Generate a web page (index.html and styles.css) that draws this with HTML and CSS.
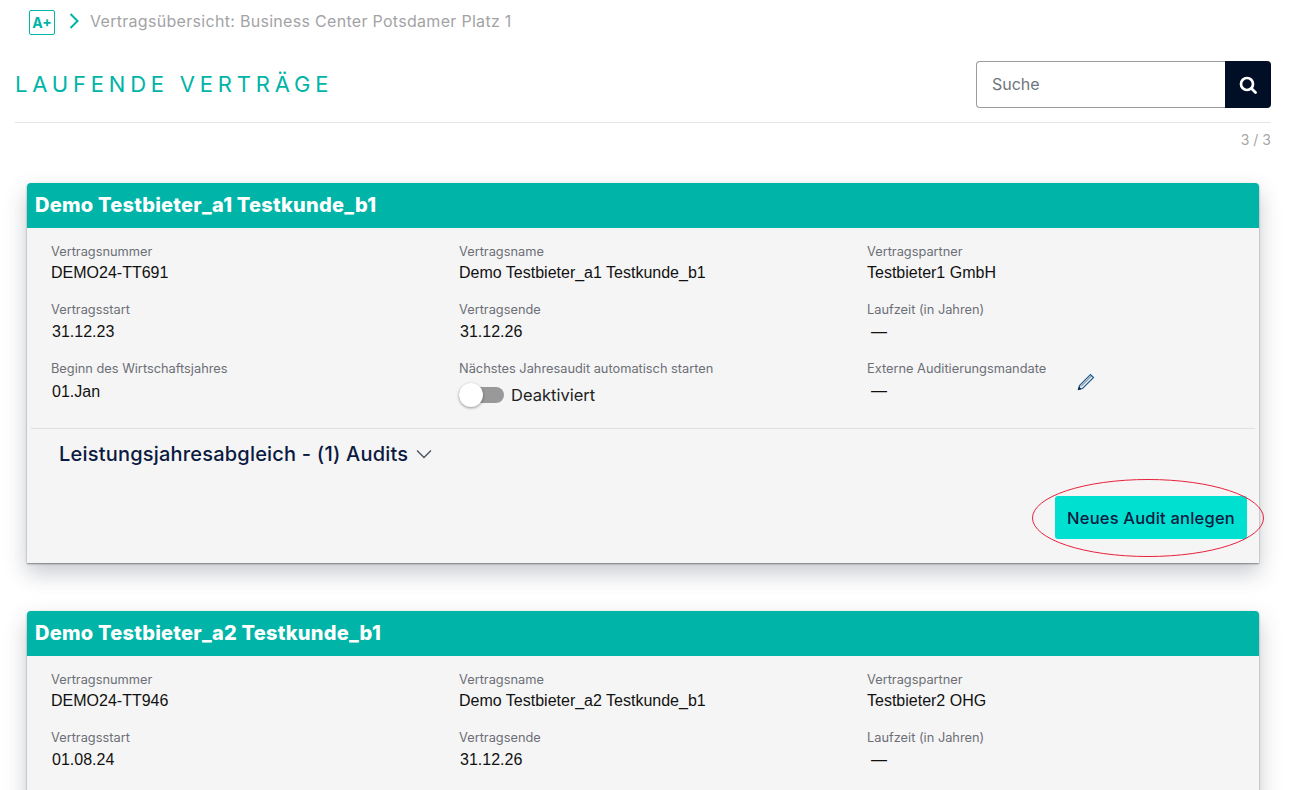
FILE: index.html
```html
<!DOCTYPE html>
<html lang="de">
<head>
<meta charset="utf-8">
<title>Laufende Verträge</title>
<link rel="stylesheet" href="styles.css">
</head>
<body>
<div class="page">
  <nav class="crumbs">
    <span class="logo">A+</span>
    <svg class="crumb-arrow" width="12" height="16" viewBox="0 0 12 16"><path d="M2.5 1 9.500 8l-7 7" fill="none" stroke="#00b4a7" stroke-width="2"/></svg>
    <span class="crumb-text">Vertragsübersicht: Business Center Potsdamer Platz 1</span>
  </nav>
  <header class="head">
    <h1 class="title">LAUFENDE VERTRÄGE</h1>
    <form class="search">
      <div class="search-input">Suche</div>
      <div class="search-btn">
        <svg width="18" height="18" viewBox="0 0 18 18"><circle cx="8" cy="8" r="6" fill="none" stroke="#fff" stroke-width="2.700"/><path d="m12.500 12.500 4 4" stroke="#fff" stroke-width="2.800" stroke-linecap="round"/></svg>
      </div>
    </form>
  </header>
  <div class="count">3 / 3</div>

  <section class="card">
    <h2 class="card-head">Demo Testbieter_a1 Testkunde_b1</h2>
    <div class="card-body">
      <div class="fields">
        <div class="field"><div class="label">Vertragsnummer</div><div class="value">DEMO24-TT691</div></div>
        <div class="field"><div class="label">Vertragsname</div><div class="value">Demo Testbieter_a1 Testkunde_b1</div></div>
        <div class="field"><div class="label">Vertragspartner</div><div class="value">Testbieter1 GmbH</div></div>
        <div class="field"><div class="label">Vertragsstart</div><div class="value inset">31.12.23</div></div>
        <div class="field"><div class="label">Vertragsende</div><div class="value inset">31.12.26</div></div>
        <div class="field"><div class="label">Laufzeit (in Jahren)</div><div class="value dash">—</div></div>
        <div class="field"><div class="label">Beginn des Wirtschaftsjahres</div><div class="value inset low">01.Jan</div></div>
        <div class="field"><div class="label">Nächstes Jahresaudit automatisch starten</div>
          <div class="toggle-row"><span class="toggle"><span class="knob"></span></span><span class="toggle-text">Deaktiviert</span></div>
        </div>
        <div class="field field-edit">
          <div><div class="label">Externe Auditierungsmandate</div><div class="value dash">—</div></div>
          <svg class="pencil" width="18" height="18" viewBox="0 0 18 18"><path d="M1.500 16.500 2.500 12.500 13.500 1.500l3 3L5.500 15.500Z" fill="none" stroke="#1a5f96" stroke-width="1.200"/><path d="M1 17 2 13.500 4.500 16Z" fill="#0d2036"/><path d="M4 13.500 14.500 3" stroke="#123" stroke-width=".7"/></svg>
        </div>
      </div>
      <div class="rule"></div>
      <div class="accordion">
        <span>Leistungsjahresabgleich - (1) Audits</span>
        <svg width="16" height="10" viewBox="0 0 16 10"><path d="m1 1.500 7 7 7-7" fill="none" stroke="#4d5662" stroke-width="1.400"/></svg>
      </div>
      <div class="actions">
        <button class="primary" type="button">Neues Audit anlegen</button>
      </div>
      <svg class="ring" width="234" height="80" viewBox="0 0 234 80"><ellipse cx="117" cy="40" rx="115.500" ry="38.500" fill="none" stroke="#e8213c" stroke-width="1"/></svg>
    </div>
  </section>

  <section class="card">
    <h2 class="card-head">Demo Testbieter_a2 Testkunde_b1</h2>
    <div class="card-body">
      <div class="fields">
        <div class="field"><div class="label">Vertragsnummer</div><div class="value">DEMO24-TT946</div></div>
        <div class="field"><div class="label">Vertragsname</div><div class="value">Demo Testbieter_a2 Testkunde_b1</div></div>
        <div class="field"><div class="label">Vertragspartner</div><div class="value">Testbieter2 OHG</div></div>
        <div class="field"><div class="label">Vertragsstart</div><div class="value inset">01.08.24</div></div>
        <div class="field"><div class="label">Vertragsende</div><div class="value inset">31.12.26</div></div>
        <div class="field"><div class="label">Laufzeit (in Jahren)</div><div class="value dash">—</div></div>
      </div>
    </div>
  </section>
</div>
</body>
</html>
```
FILE: styles.css
```css
* { box-sizing: border-box; }
html, body { margin: 0; height: 790px; overflow: hidden; background: #fff; }
body { font-family: "Inter", "Liberation Sans", sans-serif; color: #0b1a33; }
.page { padding: 10px 21px 0 15px; }
.crumbs { display: flex; align-items: center; height: 25px; padding-left: 14px; }
.logo { width: 26px; height: 25px; border: 1px solid #00b4a7; border-radius: 2px; color: #00b4a7; font-size: 14px; font-weight: 700; display: flex; align-items: center; justify-content: center; }
.crumb-arrow { margin-left: 13px; margin-top: -3px; }
.crumb-text { margin-left: 10px; margin-top: -3px; color: #a3a3a6; font-size: 16px; letter-spacing: .3px; }
.head { display: flex; justify-content: space-between; align-items: center; height: 88px; padding-top: 12px; border-bottom: 1px solid #e4e4e4; }
.title { margin: -2px 0 0; color: #00b4a7; font-size: 22px; font-weight: 400; letter-spacing: 4.800px; }
.search { display: flex; width: 295px; height: 47px; }
.search-input { flex: 1; border: 1px solid #9c9c9c; border-right: 0; border-radius: 4px 0 0 4px; padding: 0 0 2px 15px; display: flex; align-items: center; color: #70757c; font-size: 16px; }
.search-btn { width: 46px; background: #000f26; border-radius: 0 4px 4px 0; display: flex; align-items: center; justify-content: center; }
.count { margin-top: 8px; height: 17px; text-align: right; color: #a6a6a6; font-size: 14px; line-height: 17px; }
.card { margin: 35px 12px 48px 12px; background: #f5f5f5; box-shadow: 0 10px 22px rgba(40, 45, 70, .26), 0 1px 2px rgba(0, 0, 0, .45); border-radius: 4px 4px 0 0; }
.card-head { margin: 0; height: 45px; padding-left: 8px; background: #00b4a7; color: #fff; font-size: 20px; font-weight: 800; line-height: 45px; border-radius: 4px 4px 0 0; letter-spacing: .25px; }
.card-body { position: relative; height: 335px; padding: 16px 4px 0; }
.fields { display: grid; grid-template-columns: repeat(3, 408px); grid-template-rows: 58px 59px 59px; padding-left: 20px; }
.field { min-width: 0; }
.label { color: #6c6f76; font-size: 12.800px; line-height: 16px; }
.value { margin-top: 3px; color: #111; font-family: "Liberation Sans", sans-serif; font-size: 16px; line-height: 20px; }
.inset { margin-left: 1px; margin-top: 4px; }
.low { margin-top: 5px; }
.dash { margin-left: 4px; margin-top: 4px; }
.field-edit { display: flex; align-items: flex-start; gap: 31px; }
.pencil { margin-top: 12px; }
.toggle-row { display: flex; align-items: center; height: 26px; margin-top: 5px; }
.toggle { position: relative; display: block; width: 45px; height: 16px; background: #999; border-radius: 8px; }
.knob { position: absolute; left: 0; top: -4px; width: 24px; height: 24px; background: #fff; border-radius: 50%; box-shadow: 0 1px 3px rgba(0, 0, 0, .4); }
.toggle-text { margin-left: 7px; color: #222; font-size: 16.500px; }
.rule { margin-top: 8px; border-top: 1px solid #e0e0e0; }
.accordion { display: flex; align-items: center; gap: 8px; height: 50px; padding-left: 28px; color: #0b1a40; font-size: 20px; font-weight: 500; letter-spacing: .2px; }
.actions { display: flex; justify-content: flex-end; margin-top: 17px; padding-right: 8px; }
.primary { width: 192px; height: 43px; background: #00e0d0; border: 0; border-radius: 3px; color: #0b1a40; font-family: inherit; font-size: 16.500px; font-weight: 500; letter-spacing: .2px; }
.ring { position: absolute; right: -6px; bottom: 5px; }
```
